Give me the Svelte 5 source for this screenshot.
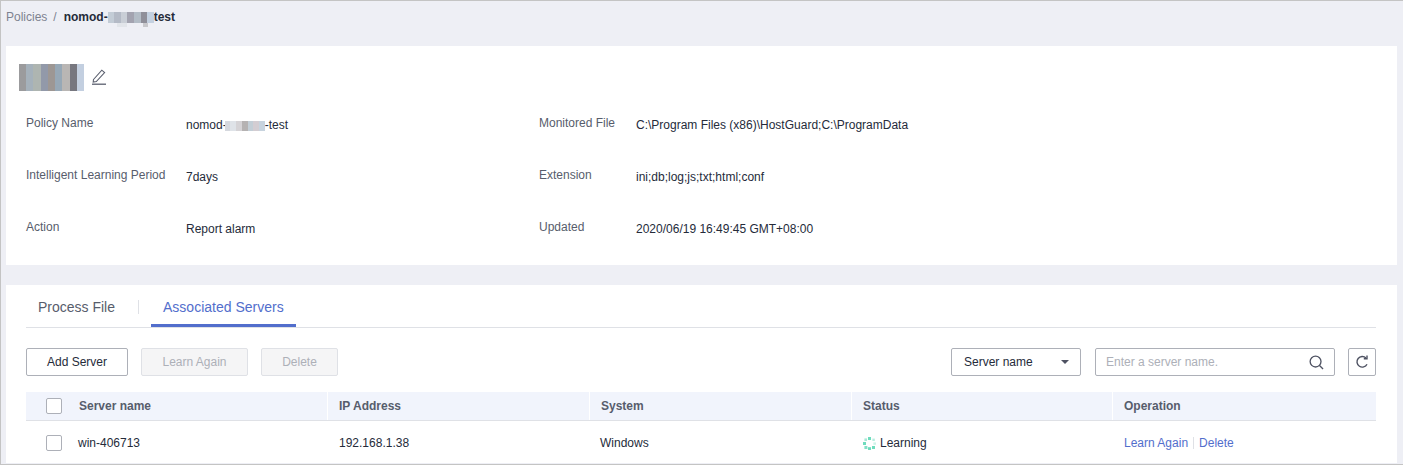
<script lang="ts">
  const titleMosaic = ["#9b9b9d", "#a5b1bb", "#aeb5b1", "#9299a9", "#9d9794", "#97a8b6", "#b9b6b4", "#77777f", "#c3cfe0"];
  const crumbMosaic = ["#c3ccd6", "#b4bac6", "#c9ced6", "#a3a3b0", "#b3bcc6", "#8f8f99", "#c3d0e0"];
  const nameMosaic = ["#d5d8de", "#dfe3e8", "#d5d3d6", "#b5b2b2", "#c3ced6", "#d3cdd2", "#c7d3de"];

  const info = [
    { label: "Policy Name", value: "", label2: "Monitored File", value2: "C:\\Program Files (x86)\\HostGuard;C:\\ProgramData" },
    { label: "Intelligent Learning Period", value: "7days", label2: "Extension", value2: "ini;db;log;js;txt;html;conf" },
    { label: "Action", value: "Report alarm", label2: "Updated", value2: "2020/06/19 16:49:45 GMT+08:00" },
  ];
</script>

<div class="page">
  <nav class="crumbs">
    <span class="parent">Policies</span>
    <span class="sep">/</span>
    <span class="current">nomod-<span class="mosaic">{#each crumbMosaic as c}<i style="background:{c}"></i>{/each}<b class="bit light"></b><b class="bit dark"></b></span>test</span>
  </nav>

  <section class="card summary">
    <div class="title">
      <div class="title-mosaic">
        {#each titleMosaic as c}<i style="background:{c}"></i>{/each}
      </div>
      <svg class="edit" width="16" height="17" viewBox="0 0 16 17" fill="none" stroke="#5a5f6e" stroke-width="1.1">
        <path d="M2.5 11.5 L10.8 2.2 L13.6 4.6 L5.3 13.6 L2.2 14 Z" />
        <path d="M1 16.2 H15" stroke-width="1.3" />
      </svg>
    </div>

    <div class="info">
      {#each info as row}
        <div class="row">
          <div class="label first">{row.label}</div>
          <div class="value first">
            {#if row.value}
              {row.value}
            {:else}
              nomod-<span class="mosaic soft">{#each nameMosaic as c}<i style="background:{c}"></i>{/each}</span>-test
            {/if}
          </div>
          <div class="label second">{row.label2}</div>
          <div class="value">{row.value2}</div>
        </div>
      {/each}
    </div>
  </section>

  <section class="card servers">
    <div class="tabs">
      <div class="tab">Process File</div>
      <div class="divider"></div>
      <div class="tab active">Associated Servers</div>
    </div>

    <div class="toolbar">
      <button class="btn primary">Add Server</button>
      <button class="btn learn" disabled>Learn Again</button>
      <button class="btn del" disabled>Delete</button>
      <div class="spacer"></div>
      <div class="select">
        <span>Server name</span>
        <span class="caret"></span>
      </div>
      <div class="search">
        <span>Enter a server name.</span>
        <svg width="15" height="15" viewBox="0 0 16 16" fill="none" stroke="#4e5262" stroke-width="1.4">
          <circle cx="7" cy="7" r="5.8" />
          <path d="M11.2 11.2 L15 15" />
        </svg>
      </div>
      <button class="refresh" aria-label="Refresh">
        <svg width="14" height="14" viewBox="0 0 14 14" fill="none" stroke="#4e5262" stroke-width="1.4">
          <path d="M12 9.2 A5.3 5.3 0 1 1 11 3" />
          <path d="M12 0.6 V3.8 H8.8" />
        </svg>
      </button>
    </div>

    <div class="table">
      <div class="tr head">
        <div class="td name"><span class="check"></span><span class="name-text">Server name</span></div>
        <div class="td ip">IP Address</div>
        <div class="td system">System</div>
        <div class="td status">Status</div>
        <div class="td op">Operation</div>
      </div>
      <div class="tr body">
        <div class="td name"><span class="check"></span><span class="name-text">win-406713</span></div>
        <div class="td ip">192.168.1.38</div>
        <div class="td system"><span class="system-text">Windows</span></div>
        <div class="td status">
          <svg class="spinner" width="13" height="13" viewBox="0 0 13 13">
            <g fill="#6fdcbd">
              <rect x="5" y="0" width="3" height="3" />
              <rect x="9.4" y="1.6" width="2.4" height="2.4" opacity=".5" />
              <rect x="10.4" y="5.4" width="2.6" height="2.4" opacity=".35" />
              <rect x="9" y="9" width="3" height="3" />
              <rect x="5" y="10.2" width="3" height="2.8" />
              <rect x="1.4" y="9" width="3" height="3" opacity=".85" />
              <rect x="0" y="5" width="3" height="3" />
              <rect x="1.4" y="1.4" width="2.6" height="2.6" opacity=".6" />
            </g>
          </svg>
          Learning
        </div>
        <div class="td op">
          <a href="#learn">Learn Again</a><span class="op-sep"></span><a href="#delete">Delete</a>
        </div>
      </div>
    </div>
  </section>
</div>

<style>
  :global(body) {
    margin: 0;
  }

  .page {
    box-sizing: border-box;
    width: 1403px;
    height: 465px;
    overflow: hidden;
    background: #eeeff5;
    border: 1px solid #c4c4c4;
    border-right: 0;
    padding: 0 6px 0 5px;
    font-family: "Liberation Sans", Arial, sans-serif;
    font-size: 12px;
    color: #252b3a;
  }

  .crumbs {
    height: 45px;
    padding-top: 9px;
    box-sizing: border-box;
    line-height: 14px;
    display: flex;
  }

  .parent {
    color: #7d8290;
  }

  .sep {
    color: #7d8290;
    margin: 0 7px 0 6px;
  }

  .current {
    font-weight: 700;
    white-space: nowrap;
  }

  .mosaic {
    display: inline-flex;
    position: relative;
    vertical-align: -2px;
    height: 11px;
    width: 46px;
  }

  .mosaic i {
    flex: 1;
    height: 100%;
  }

  .bit {
    position: absolute;
    top: 11px;
    height: 4px;
  }

  .bit.light {
    left: 9px;
    width: 10px;
    background: #e2e5ea;
  }

  .bit.dark {
    left: 35px;
    width: 5px;
    background: #c8c8cc;
  }

  .mosaic.soft {
    width: 40px;
    height: 10px;
    margin-left: -2px;
  }

  .card {
    background: #fff;
  }

  .summary {
    height: 219px;
    box-sizing: border-box;
    padding: 18px 0 0 13px;
  }

  .title {
    display: flex;
    align-items: center;
    gap: 7px;
    height: 27px;
  }

  .edit {
    margin-top: -2px;
  }

  .title-mosaic {
    display: flex;
    width: 65px;
    height: 27px;
  }

  .title-mosaic i {
    flex: 1;
  }

  .info {
    padding: 8px 0 0 7px;
  }

  .row {
    display: flex;
    height: 52px;
    align-items: center;
  }

  .label {
    color: #575d6c;
    position: relative;
    top: -2px;
  }

  .label.first {
    width: 160px;
  }

  .value.first {
    width: 353px;
    white-space: nowrap;
  }

  .label.second {
    width: 97px;
  }

  .servers {
    margin-top: 20px;
    height: 178px;
    padding: 0 21px 0 20px;
  }

  .tabs {
    display: flex;
    align-items: flex-start;
    height: 42px;
    border-bottom: 1px solid #dfe1e6;
    font-size: 14px;
    color: #575d6c;
    padding-left: 12px;
  }

  .tab {
    height: 42px;
    line-height: 44px;
    box-sizing: border-box;
  }

  .divider {
    width: 1px;
    height: 14px;
    background: #dfe1e6;
    margin: 15px 12px 0 23px;
  }

  .tab.active {
    color: #526ecc;
    border-bottom: 3px solid #526ecc;
    padding: 0 12px;
  }

  .toolbar {
    display: flex;
    align-items: center;
    gap: 13px;
    margin-top: 20px;
    height: 28px;
  }

  .spacer {
    flex: 1;
  }

  .btn {
    box-sizing: border-box;
    height: 28px;
    padding: 0;
    font: inherit;
    border-radius: 2px;
    background: #fff;
    border: 1px solid #adb0b8;
    color: #252b3a;
  }

  .btn.primary {
    width: 102px;
  }

  .btn.learn {
    width: 107px;
  }

  .btn.del {
    width: 77px;
  }

  .btn:disabled {
    background: #f5f5f6;
    border-color: #dfe1e6;
    color: #adb0b8;
  }

  .select,
  .search {
    box-sizing: border-box;
    height: 28px;
    border: 1px solid #adb0b8;
    border-radius: 2px;
    display: flex;
    align-items: center;
    justify-content: space-between;
  }

  .select {
    width: 130px;
    padding: 0 11px 0 12px;
  }

  .caret {
    width: 0;
    height: 0;
    border-left: 4px solid transparent;
    border-right: 4px solid transparent;
    border-top: 4px solid #4e5262;
  }

  .search {
    width: 240px;
    padding: 0 10px;
    color: #adb0b8;
    margin-left: 1px;
  }

  .refresh {
    box-sizing: border-box;
    width: 28px;
    height: 28px;
    padding: 0;
    background: #fff;
    border: 1px solid #adb0b8;
    border-radius: 2px;
    display: flex;
    align-items: center;
    justify-content: center;
  }

  .table {
    margin-top: 16px;
  }

  .tr {
    display: flex;
    align-items: center;
  }

  .head {
    box-sizing: border-box;
    height: 29px;
    background: #f1f4fc;
    border-bottom: 1px solid #dfe1e6;
    font-weight: 700;
    color: #575d6c;
  }

  .body {
    height: 44px;
  }

  .td {
    box-sizing: border-box;
    height: 100%;
    display: flex;
    align-items: center;
    padding-left: 12px;
  }

  .head .td + .td {
    border-left: 1px solid #fff;
    padding-left: 11px;
  }

  .td.name {
    width: 301px;
    padding-left: 20px;
  }

  .name-text {
    margin-left: 17px;
  }

  .body .name-text {
    margin-left: 16px;
  }

  .td.ip {
    width: 262px;
  }

  .td.system {
    width: 262px;
  }

  .system-text {
    margin-left: -1px;
  }

  .td.status {
    width: 261px;
    gap: 4px;
  }

  .td.op {
    flex: 1;
  }

  .check {
    box-sizing: border-box;
    width: 16px;
    height: 16px;
    border: 1px solid #adb0b8;
    border-radius: 2px;
    background: #fff;
  }

  .op a {
    color: #526ecc;
    text-decoration: none;
  }

  .op-sep {
    display: inline-block;
    width: 1px;
    height: 12px;
    background: #dfe1e6;
    margin: 0 5px;
  }
</style>
